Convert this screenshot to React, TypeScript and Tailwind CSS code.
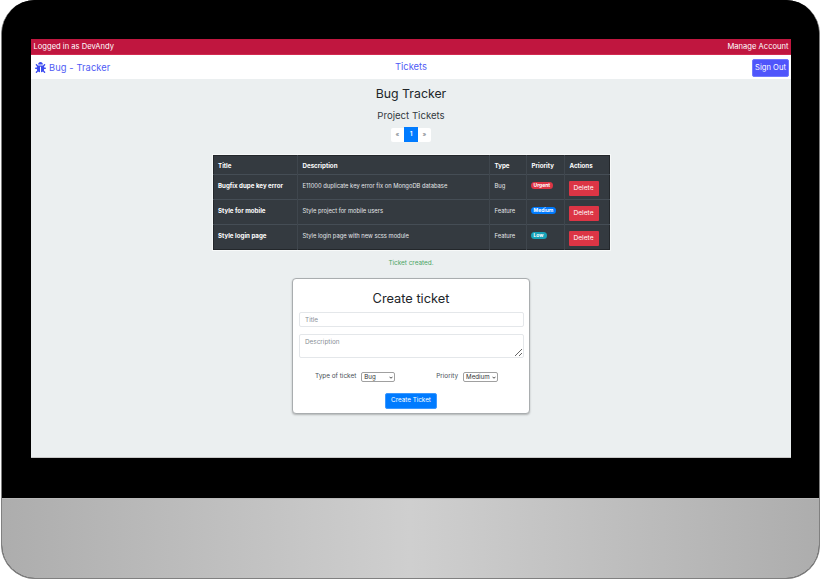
import { FaBug } from "react-icons/fa";

const rows = [
  { t: "Bugfix dupe key error", d: "E11000 duplicate key error fix on MongoDB database", y: "Bug", p: "Urgent", c: "bg-[#dc3545]" },
  { t: "Style for mobile", d: "Style project for mobile users", y: "Feature", p: "Medium", c: "bg-[#007bff]" },
  { t: "Style login page", d: "Style login page with new scss module", y: "Feature", p: "Low", c: "bg-[#17a2b8]" },
];

function Select({ label, w }: { label: string; w: string }) {
  return (
    <span className={`relative ml-[5px] h-[10px] ${w} border border-[#a0a0a0] rounded-[2px] bg-white text-[6.2px] leading-[8px] text-[#333] pl-[2px] block`}>
      {label}
      <svg viewBox="0 0 8 5" className="absolute right-[1.5px] top-[2.5px] w-[4px] h-[3px]">
        <path d="M1 1l3 3 3-3" fill="none" stroke="#222" strokeWidth="1.6" />
      </svg>
    </span>
  );
}

export default function App() {
  return (
    <div className="w-[820px] h-[582px] bg-white overflow-hidden font-['Inter',sans-serif]">
      <div className="w-[819px] h-[579px] ml-px rounded-[34px] overflow-hidden flex flex-col border border-[#808080] border-t-0 bg-black">
        <div className="h-[498px] bg-black px-[29px] pt-[39px] shrink-0">
          <div className="w-[760px] h-[419px] bg-[#ebeff0] flex flex-col border-b border-[#c8c8c8]">
            <div className="h-4 bg-[#c0163f] border-b border-[#d22a50] text-white text-[7.6px] leading-[15px] px-[2.5px] flex justify-between shrink-0">
              <span>Logged in as DevAndy</span>
              <span>Manage Account</span>
            </div>
            <div className="h-6 pt-px bg-white grid grid-cols-[1fr_auto_1fr] items-center px-[2px] shrink-0">
              <div className="ml-[2px] flex items-center gap-[3px] text-[#4f5bf5] text-[9.3px] tracking-[0.1px]">
                <FaBug className="w-[11px] h-[11px] text-[#3d4cf0]" />
                <span>Bug - Tracker</span>
              </div>
              <div className="text-center text-[#4f5bf5] text-[9.4px]">Tickets</div>
              <button className="justify-self-end w-[37px] h-[18px] bg-[#4f55fb] border border-[#6f78ff] text-white text-[7.6px] rounded-[2px]">Sign Out</button>
            </div>
            <div className="flex flex-col items-center text-[#212529]">
              <h1 className="mt-[6px] text-[12.3px] leading-[18px]">Bug Tracker</h1>
              <h2 className="mt-[6px] text-[9.6px] leading-[14px] text-[#333a40]">Project Tickets</h2>
              <div className="mt-[4px] flex h-[15px] items-center text-[6.5px]">
                <span className="w-[13px] h-[14px] bg-white text-[#6c757d] flex items-center justify-center rounded-l-[2px]">«</span>
                <span className="w-[14px] h-[15px] bg-[#007bff] text-white font-semibold flex items-center justify-center">1</span>
                <span className="w-[13px] h-[14px] bg-white text-[#6c757d] flex items-center justify-center rounded-r-[2px]">»</span>
              </div>
              <table className="mt-[13px] w-[396px] table-fixed bg-[#343a40] text-[#e4e7ea] text-[5.8px] border-collapse border border-[#23272b] shadow-[0_0_0_1px_rgba(255,255,255,0.6)]">
                <colgroup>
                  <col className="w-[84px]" />
                  <col className="w-[192px]" />
                  <col className="w-[37px]" />
                  <col className="w-[38px]" />
                  <col className="w-[45px]" />
                </colgroup>
                <thead>
                  <tr className="h-[19px] text-white font-bold text-left text-[6.2px]">
                    <th className="pl-[4.5px] pt-[2px] border-r border-[#3f464d]">Title</th>
                    <th className="pl-[5px] pt-[2px] border-r border-[#3f464d]">Description</th>
                    <th className="pl-[5px] pt-[2px] border-r border-[#3f464d]">Type</th>
                    <th className="pl-[5px] pt-[2px] border-r border-[#3f464d]">Priority</th>
                    <th className="pl-[5px] pt-[2px]">Actions</th>
                  </tr>
                </thead>
                <tbody>
                  {rows.map((r) => (
                    <tr key={r.t} className="h-[25px] border-t border-[#454d55]">
                      <td className="pl-[4.5px] pb-[2px] font-bold text-white text-[6.2px] border-r border-[#3f464d]">{r.t}</td>
                      <td className="pl-[5px] pb-[2px] border-r border-[#3f464d]">{r.d}</td>
                      <td className="pl-[5px] pb-[2px] border-r border-[#3f464d]">{r.y}</td>
                      <td className="pl-[4px] pb-[3px] border-r border-[#3f464d]">
                        <span className={`${r.c} inline-block rounded-full px-[3px] text-white text-[5px] leading-[7px] font-bold`}>{r.p}</span>
                      </td>
                      <td className="pl-[4px]">
                        <button className="w-[30px] h-[15px] mt-[3px] block bg-[#dc3545] text-white text-[6.6px] rounded-[1px]">Delete</button>
                      </td>
                    </tr>
                  ))}
                </tbody>
              </table>
              <p className="mt-[8px] text-[6.4px] leading-[10px] text-[#4aa564]">Ticket created.</p>
              <form className="mt-[9.5px] w-[238px] h-[136px] bg-white rounded-[4px] border border-[#a9adaf] shadow-[0_1px_2px_rgba(0,0,0,0.25)] px-[6px] flex flex-col">
                <h3 className="mt-[11.5px] text-center text-[12.8px] leading-[18px]">Create ticket</h3>
                <input placeholder="Title" className="mt-[4px] h-[15px] w-[225px] border border-[#e4e7ea] rounded-[2px] px-[5px] text-[6.4px] placeholder:text-[#8a9097] bg-white" />
                <textarea placeholder="Description" className="mt-[7px] h-[24px] w-[225px] border border-[#e4e7ea] rounded-[2px] px-[5px] py-[3px] text-[6.4px] placeholder:text-[#8a9097] bg-white" />
                <div className="mt-[13px] h-[12px] flex items-center text-[6.4px] text-[#495057]">
                  <span className="ml-[16px]">Type of ticket</span>
                  <Select label="Bug" w="w-[34px]" />
                  <span className="ml-[41px]">Priority</span>
                  <Select label="Medium" w="w-[35px]" />
                </div>
                <button type="button" className="mt-[10px] mx-auto w-[52px] h-[16px] bg-[#007bff] border border-[#3c98ff] rounded-[2px] text-white text-[6.3px]">Create Ticket</button>
              </form>
            </div>
          </div>
        </div>
        <div className="flex-1 border-t border-[#b9b9b9] bg-[linear-gradient(90deg,#adadad_0%,#cfcfcf_50%,#adadad_100%)]" />
      </div>
    </div>
  );
}
